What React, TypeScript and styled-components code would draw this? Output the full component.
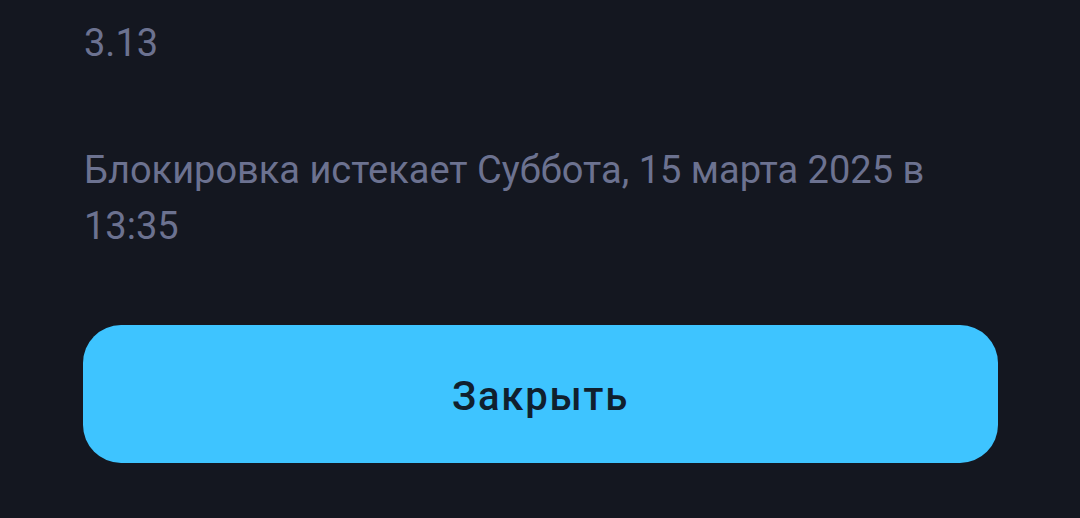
import React from "react";
import styled, { createGlobalStyle } from "styled-components";

const Global = createGlobalStyle`
  html, body {
    margin: 0;
    padding: 0;
    background: #141720;
  }
  body {
    font-family: Roboto, "Noto Sans", sans-serif;
  }
`;

const Sheet = styled.div`
  width: 1080px;
  height: 518px;
  box-sizing: border-box;
  padding: 15px 82px 0 83px;
  background: #141720;
  display: flex;
  flex-direction: column;
  gap: 71px;
  overflow: hidden;
`;

const Note = styled.p`
  margin: 0;
  padding-left: 1px;
  font-size: 38px;
  line-height: 56px;
  font-weight: 400;
  color: #6c7290;
`;

const CloseButton = styled.button`
  width: 100%;
  height: 138px;
  flex-shrink: 0;
  border: none;
  border-radius: 38px;
  background: #3ec4ff;
  color: #10202e;
  font-family: Roboto, "Noto Sans", sans-serif;
  font-size: 40px;
  font-weight: 500;
  letter-spacing: 1.8px;
  padding: 4px 0 0;
  cursor: pointer;
  display: flex;
  align-items: center;
  justify-content: center;
`;

export default function App() {
  return (
    <>
      <Global />
      <Sheet>
        <Note>3.13</Note>
        <Note>
          Блокировка истекает Суббота, 15 марта 2025 в
          <br />
          13:35
        </Note>
        <CloseButton>Закрыть</CloseButton>
      </Sheet>
    </>
  );
}
